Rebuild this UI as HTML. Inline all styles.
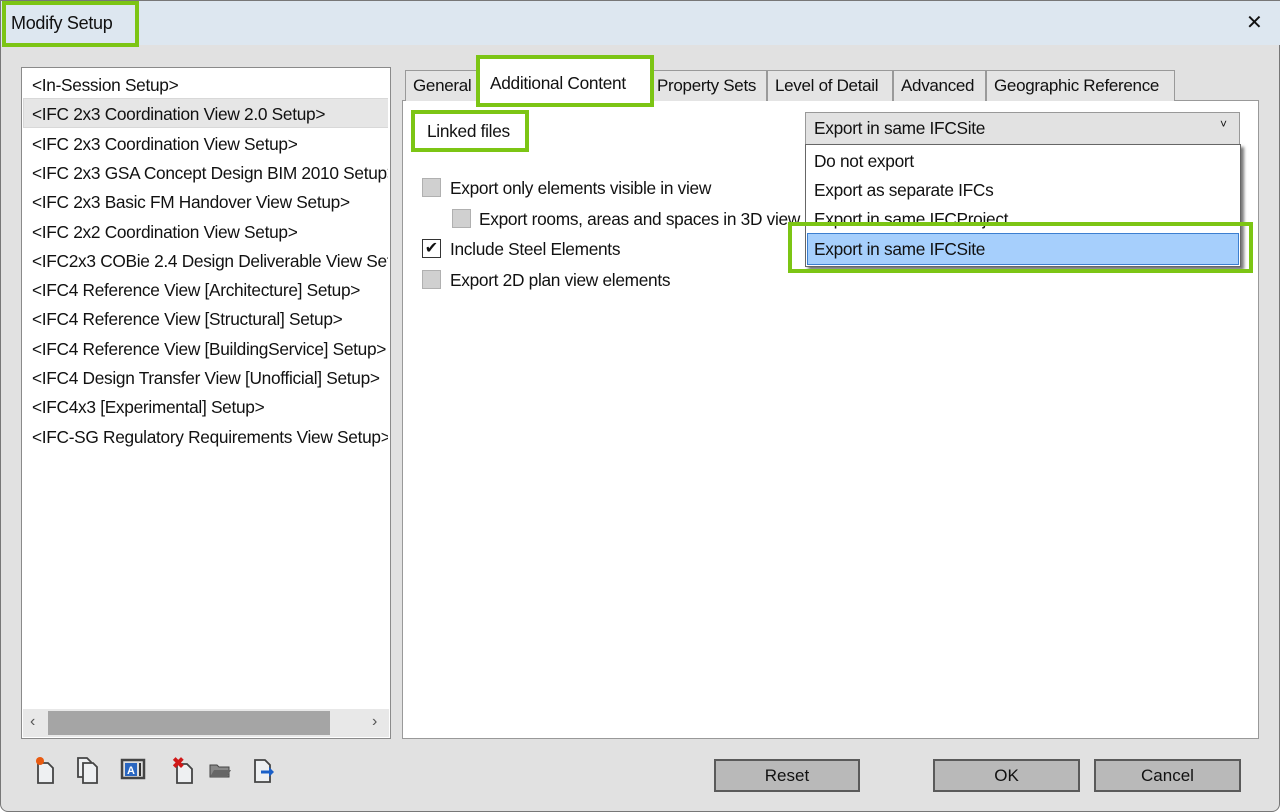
<!DOCTYPE html>
<html><head><meta charset="utf-8"><style>
*{box-sizing:border-box;margin:0;padding:0}
body{width:1280px;height:812px;background:#fff;font-family:"Liberation Sans",sans-serif;font-size:17.3px;color:#111;position:relative;overflow:hidden}
.win{position:absolute;left:0;top:0;width:1280px;height:812px;background:#e1e1e1;border:1px solid #777;border-radius:0 0 8px 8px}
.title{position:absolute;left:0;top:0;width:1280px;height:44px;background:#dde7f0}
.a{position:absolute;white-space:nowrap}
.g{position:absolute;border:4px solid #7cc514}
.list{left:20px;top:66px;width:370px;height:672px;background:#fff;border:1px solid #8a8a8a;overflow:hidden}
.it{position:absolute;left:10px;white-space:nowrap;font-size:17.3px;letter-spacing:-0.3px}
.tab{position:absolute;top:69px;height:31px;background:#e4e4e4;border:1px solid #999;border-bottom:none;font-size:17px;padding:5px 0 0 7px;white-space:nowrap;overflow:hidden;letter-spacing:-0.3px}
.panel{left:401px;top:99px;width:857px;height:639px;background:#fff;border:1px solid #999}
.cb{position:absolute;width:19px;height:19px;background:#d0d0d0;border:1px solid #b0b0b0}
.lbl{position:absolute;font-size:17.3px;white-space:nowrap;letter-spacing:-0.3px}
.btn{position:absolute;top:758px;height:33px;background:#b9b9b9;border:2px solid #5a5a5a;text-align:center;line-height:29px;font-size:17px}
</style></head><body>
<div class="win">
<div class="title"></div>
<div class="a" style="left:10px;top:12px;font-size:18px;letter-spacing:-0.3px">Modify Setup</div>
<div class="a" style="left:1245px;top:9px;font-size:20px">✕</div>
<div class="g" style="left:1px;top:0;width:137px;height:46px"></div>

<div class="a list">
<div class="a" style="left:1px;top:30px;width:366px;height:30px;background:#e6e6e6;border:1px solid #d8d8d8"></div>
<div class="it" style="top:7px">&lt;In-Session Setup&gt;</div>
<div class="it" style="top:36px">&lt;IFC 2x3 Coordination View 2.0 Setup&gt;</div>
<div class="it" style="top:66px">&lt;IFC 2x3 Coordination View Setup&gt;</div>
<div class="it" style="top:95px">&lt;IFC 2x3 GSA Concept Design BIM 2010 Setup&gt;</div>
<div class="it" style="top:124px">&lt;IFC 2x3 Basic FM Handover View Setup&gt;</div>
<div class="it" style="top:154px">&lt;IFC 2x2 Coordination View Setup&gt;</div>
<div class="it" style="top:183px">&lt;IFC2x3 COBie 2.4 Design Deliverable View Setup&gt;</div>
<div class="it" style="top:212px">&lt;IFC4 Reference View [Architecture] Setup&gt;</div>
<div class="it" style="top:241px">&lt;IFC4 Reference View [Structural] Setup&gt;</div>
<div class="it" style="top:271px">&lt;IFC4 Reference View [BuildingService] Setup&gt;</div>
<div class="it" style="top:300px">&lt;IFC4 Design Transfer View [Unofficial] Setup&gt;</div>
<div class="it" style="top:329px">&lt;IFC4x3 [Experimental] Setup&gt;</div>
<div class="it" style="top:359px">&lt;IFC-SG Regulatory Requirements View Setup&gt;</div>
<div class="a" style="left:366px;top:0;width:4px;height:640px;background:#fff"></div>
<div class="a" style="left:1px;top:641px;width:366px;height:28px;background:#e8e8e8"></div>
<div class="a" style="left:26px;top:643px;width:282px;height:24px;background:#a5a5a5"></div>
<div class="a" style="left:8px;top:645px;color:#555;font-size:16px">‹</div>
<div class="a" style="left:350px;top:645px;color:#555;font-size:16px">›</div>
</div>

<div class="a panel"></div>
<div class="tab" style="left:404px;width:73px">General</div>
<div class="tab" style="left:648px;width:118px">Property Sets</div>
<div class="tab" style="left:766px;width:126px">Level of Detail</div>
<div class="tab" style="left:892px;width:93px">Advanced</div>
<div class="tab" style="left:985px;width:189px">Geographic Reference</div>
<div class="a" style="left:479px;top:58px;width:170px;height:44px;background:#fff"></div>
<div class="a" style="left:489px;top:72px;letter-spacing:-0.3px">Additional Content</div>
<div class="g" style="left:475px;top:54px;width:178px;height:52px"></div>
<div class="a" style="left:426px;top:120px;letter-spacing:-0.3px">Linked files</div>
<div class="g" style="left:410px;top:109px;width:118px;height:42px"></div>

<div class="cb" style="left:421px;top:177px"></div><div class="lbl" style="left:449px;top:177px">Export only elements visible in view</div>
<div class="cb" style="left:451px;top:208px"></div><div class="lbl" style="left:478px;top:208px">Export rooms, areas and spaces in 3D view</div>
<div class="cb" style="left:421px;top:238px;background:#fff;border:1px solid #333;font-size:16px;line-height:17px;text-align:center">✔</div><div class="lbl" style="left:449px;top:238px">Include Steel Elements</div>
<div class="cb" style="left:421px;top:269px"></div><div class="lbl" style="left:449px;top:269px">Export 2D plan view elements</div>

<div class="a" style="left:804px;top:111px;width:435px;height:33px;background:#e2e2e2;border:1px solid #999"></div>
<div class="a" style="left:813px;top:117px;letter-spacing:-0.3px">Export in same IFCSite</div>
<div class="a" style="left:1219px;top:116px;font-size:12px">˅</div>
<div class="a" style="left:804px;top:143px;width:436px;height:123px;background:#fff;border:1px solid #666;box-shadow:3px 3px 3px #777"></div>
<div class="a" style="left:813px;top:150px;letter-spacing:-0.3px">Do not export</div>
<div class="a" style="left:813px;top:179px;letter-spacing:-0.3px">Export as separate IFCs</div>
<div class="a" style="left:813px;top:208px;letter-spacing:-0.3px">Export in same IFCProject</div>
<div class="a" style="left:806px;top:232px;width:432px;height:32px;background:#a6cffc;border:1px solid #3c7fd0"></div>
<div class="a" style="left:813px;top:238px;letter-spacing:-0.3px">Export in same IFCSite</div>
<div class="g" style="left:787px;top:221px;width:465px;height:51px"></div>

<div class="btn" style="left:713px;width:146px">Reset</div>
<div class="btn" style="left:932px;width:147px">OK</div>
<div class="btn" style="left:1093px;width:147px">Cancel</div>

<svg class="a" style="left:30px;top:752px" width="260" height="34">
<g fill="#eef0f2" stroke="#444" stroke-width="1.8">
<path d="M7 10h10l5 5v15H7z"/>
<path d="M47 5h9l4 4v15H47z"/><path d="M52 10h10l4 4v16H52z"/>
<rect x="91" y="7" width="22" height="18" fill="#ddd" stroke-width="2.5"/>
<path d="M146 11h10l5 5v14H146z"/>
<path d="M224 7h10l5 5v17H224z"/>
</g>
<circle cx="9" cy="8" r="4" fill="#e85a10"/>
<rect x="94" y="10" width="12" height="13" fill="#2a66c0"/><text x="96" y="21" font-size="11" font-weight="bold" fill="#fff" font-family="Liberation Sans">A</text>
<rect x="108" y="10" width="2" height="13" fill="#333"/>
<text x="141" y="15" font-size="15" font-weight="bold" fill="#d01818" font-family="Liberation Sans">✖</text>
<path d="M179 12h7l2 2h10v10h-19z" fill="#888" stroke="#444"/><path d="M179 24l4-7h17l-4 7z" fill="#666"/>
<path d="M230 19h9" stroke="#1a5fc8" stroke-width="3"/><path d="M238 14l5 5-5 5z" fill="#1a5fc8"/>
</svg>
</div>
</body></html>
